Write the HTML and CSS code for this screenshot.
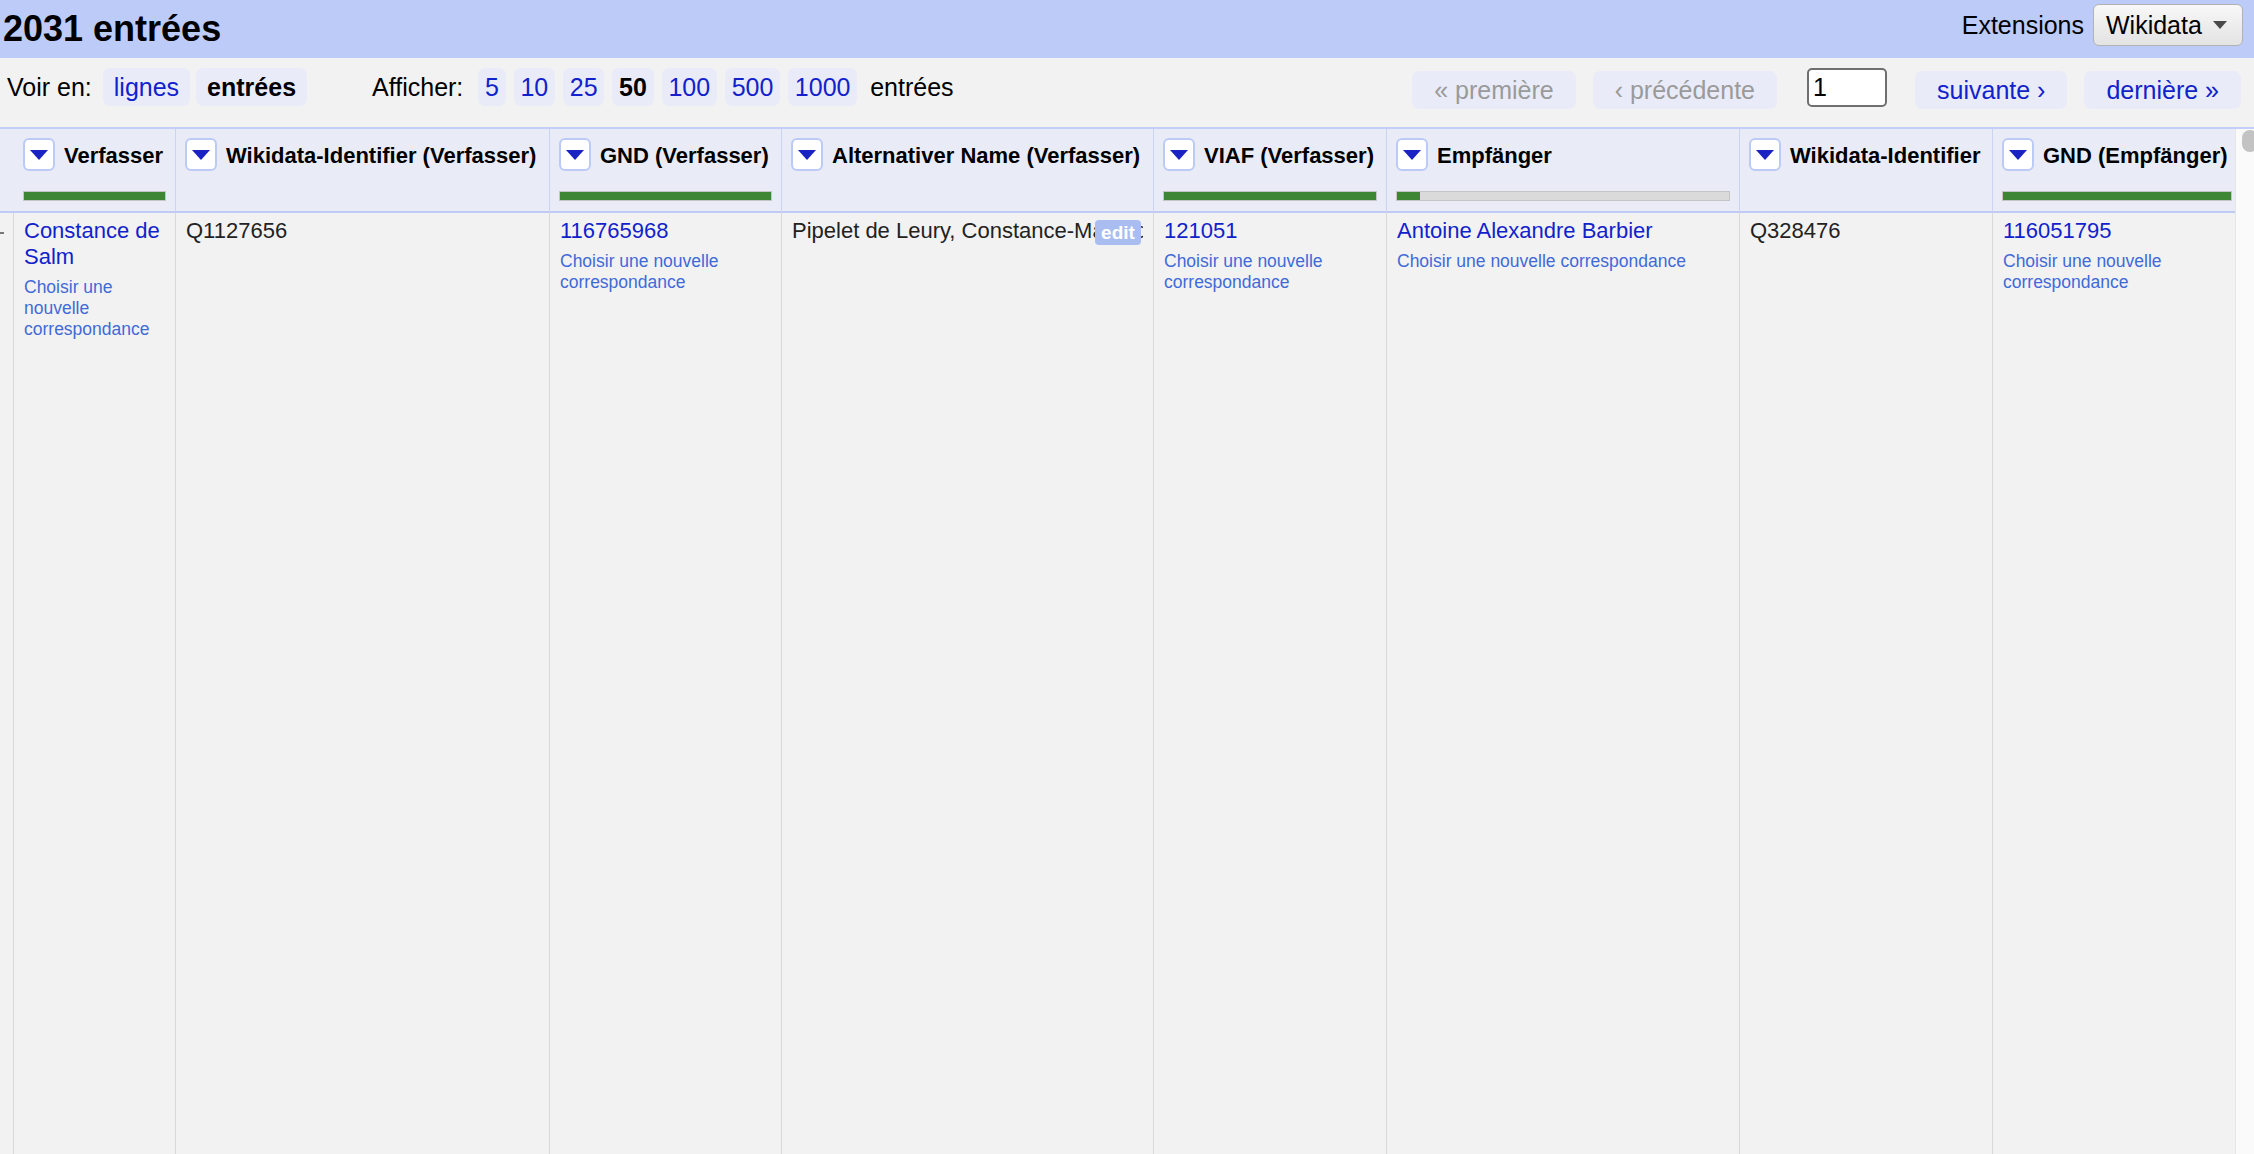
FILE: index.html
```html
<!DOCTYPE html>
<html lang="fr">
<head>
<meta charset="utf-8">
<title>2031 entrées</title>
<link rel="stylesheet" href="styles.css">
</head>
<body>
<div class="topbar">
  <h1 class="title">2031 entrées</h1>
  <div class="ext">
    <span class="ext-label">Extensions</span>
    <button class="ext-btn">Wikidata<span class="caret"></span></button>
  </div>
</div>

<div class="toolbar">
  <div class="group">
    <span class="label">Voir en:</span>
    <a class="pill">lignes</a>
    <span class="pill current">entrées</span>
  </div>
  <div class="group show">
    <span class="label">Afficher:</span>
    <a class="pill num">5</a>
    <a class="pill num">10</a>
    <a class="pill num">25</a>
    <span class="pill num current">50</span>
    <a class="pill num">100</a>
    <a class="pill num">500</a>
    <a class="pill num">1000</a>
    <span class="after">entrées</span>
  </div>
  <div class="pager">
    <span class="pbtn disabled">« première</span>
    <span class="pbtn disabled">‹ précédente</span>
    <input class="page-input" type="text" value="1">
    <a class="pbtn">suivante ›</a>
    <a class="pbtn">dernière »</a>
  </div>
</div>

<div class="grid-area">
  <div class="table">
    <div class="hcell"></div>
    <div class="hcell">
      <div class="hrow"><span class="dd"></span><span>Verfasser</span></div>
      <div class="bar"><div class="fill" style="width:100%"></div></div>
    </div>
    <div class="hcell">
      <div class="hrow"><span class="dd"></span><span>Wikidata-Identifier (Verfasser)</span></div>
    </div>
    <div class="hcell">
      <div class="hrow"><span class="dd"></span><span>GND (Verfasser)</span></div>
      <div class="bar"><div class="fill" style="width:100%"></div></div>
    </div>
    <div class="hcell">
      <div class="hrow"><span class="dd"></span><span>Alternativer Name (Verfasser)</span></div>
    </div>
    <div class="hcell">
      <div class="hrow"><span class="dd"></span><span>VIAF (Verfasser)</span></div>
      <div class="bar"><div class="fill" style="width:100%"></div></div>
    </div>
    <div class="hcell">
      <div class="hrow"><span class="dd"></span><span>Empfänger</span></div>
      <div class="bar"><div class="fill" style="width:7%"></div></div>
    </div>
    <div class="hcell">
      <div class="hrow"><span class="dd"></span><span>Wikidata-Identifier</span></div>
    </div>
    <div class="hcell last">
      <div class="hrow"><span class="dd"></span><span>GND (Empfänger)</span></div>
      <div class="bar"><div class="fill" style="width:100%"></div></div>
    </div>

    <div class="cell first"><span class="tick"></span></div>
    <div class="cell">
      <a class="link">Constance de Salm</a>
      <div class="sub">Choisir une nouvelle correspondance</div>
    </div>
    <div class="cell"><span class="plain">Q1127656</span></div>
    <div class="cell">
      <a class="link">116765968</a>
      <div class="sub">Choisir une nouvelle correspondance</div>
    </div>
    <div class="cell">
      <div class="clip">Pipelet de Leury, Constance-Marie de Théis</div>
      <span class="edit">edit</span>
    </div>
    <div class="cell">
      <a class="link">121051</a>
      <div class="sub">Choisir une nouvelle correspondance</div>
    </div>
    <div class="cell">
      <a class="link">Antoine Alexandre Barbier</a>
      <div class="sub">Choisir une nouvelle correspondance</div>
    </div>
    <div class="cell"><span class="plain">Q328476</span></div>
    <div class="cell last">
      <a class="link">116051795</a>
      <div class="sub">Choisir une nouvelle correspondance</div>
    </div>
  </div>
  <div class="scrollbar"><div class="thumb"></div></div>
</div>
</body>
</html>
```

FILE: styles.css
```css
* { box-sizing: border-box; }

html, body {
  margin: 0;
  padding: 0;
  background: #f2f2f2;
  font-family: "Liberation Sans", Arial, sans-serif;
  color: #000;
  overflow: hidden;
  height: 1154px;
}

/* ---------- top bar ---------- */
.topbar {
  height: 58px;
  background: #bdcbf9;
  display: flex;
  align-items: center;
  justify-content: space-between;
  padding: 0 11px 0 3px;
}
.title {
  margin: 0;
  font-size: 36px;
  font-weight: bold;
  line-height: 1;
}
.ext {
  display: flex;
  align-items: center;
  gap: 9px;
  margin-top: -8px;
  font-size: 25px;
}
.ext-btn {
  height: 42px;
  width: 150px;
  padding: 0 15px 0 12px;
  display: flex;
  align-items: center;
  justify-content: space-between;
  font-family: "Liberation Sans", Arial, sans-serif;
  font-size: 25px;
  color: #000;
  border: 1px solid #b2b2b2;
  border-radius: 6px;
  background: linear-gradient(#f8f8f8, #e3e3e3);
}
.caret {
  width: 0;
  height: 0;
  border-left: 7px solid transparent;
  border-right: 7px solid transparent;
  border-top: 8px solid #4a4a4a;
}

/* ---------- toolbar ---------- */
.toolbar {
  height: 69px;
  display: flex;
  align-items: flex-start;
  padding: 10px 13px 0 7px;
  font-size: 25px;
}
.group {
  display: flex;
  align-items: center;
  height: 38px;
}
.label { margin-right: 11px; }
.show { margin-left: 59px; }
.show .label { margin-right: 15px; }
.pill {
  height: 38px;
  display: inline-flex;
  align-items: center;
  padding: 0 11px;
  margin-right: 6px;
  border-radius: 7px;
  background: #e9ecf8;
  color: #1122cc;
}
.pill.num {
  padding: 0 6.75px;
  margin-right: 8px;
}
.pill.current {
  color: #000;
  font-weight: bold;
}
.after { margin-left: 5px; }

.pager {
  margin-left: auto;
  display: flex;
  align-items: flex-start;
}
.pbtn {
  height: 38px;
  margin-top: 3px;
  display: inline-flex;
  align-items: center;
  padding: 0 22px;
  border-radius: 7px;
  background: #e9ecf8;
  color: #1122cc;
  margin-left: 17px;
}
.pbtn:first-child { margin-left: 0; }
.pbtn.disabled { color: #9a9a9a; }
.page-input {
  width: 80px;
  height: 39px;
  margin: 0 11px 0 30px;
  padding: 0 4px;
  border: 2px solid #6f6f6f;
  border-radius: 5px;
  background: #fff;
  font-family: "Liberation Sans", Arial, sans-serif;
  font-size: 25px;
  color: #000;
}

/* ---------- table ---------- */
.grid-area {
  display: flex;
  height: 1027px;
  border-top: 2px solid #c3cff8;
}
.table {
  width: 2235px;
  display: grid;
  grid-template-columns: 14px 162px 374px 232px 372px 233px 353px 253px 242px;
  grid-template-rows: 84px 1fr;
}
.hcell {
  background: #e9ecf7;
  border-right: 1px solid #cbd4f3;
  border-bottom: 2px solid #bfcbf5;
  padding: 9px 9px 0 9px;
  overflow: hidden;
}
.hcell.last { padding-right: 3px; border-right: none; }
.hrow {
  display: flex;
  align-items: center;
  gap: 9px;
  height: 33px;
  padding-top: 2px;
  font-size: 22px;
  font-weight: bold;
  white-space: nowrap;
}
.dd {
  flex: none;
  width: 32px;
  height: 33px;
  margin-top: -2px;
  border: 2px solid #bccaf6;
  border-radius: 6px;
  background: #fff;
  display: flex;
  align-items: center;
  justify-content: center;
}
.dd::after {
  content: "";
  width: 0;
  height: 0;
  border-left: 9px solid transparent;
  border-right: 9px solid transparent;
  border-top: 10px solid #1a22c4;
}
.bar {
  margin-top: 20px;
  height: 10px;
  border: 1.5px solid #c4c4c4;
  background: #dadada;
}
.fill {
  height: 100%;
  background: #3e8534;
}

.cell {
  position: relative;
  border-right: 1px solid #d9d9d9;
  padding: 5px 10px;
  font-size: 22px;
  line-height: 26px;
}
.cell.last { border-right: none; }
.cell.first { padding: 0; }
.tick {
  display: block;
  width: 4px;
  height: 2px;
  margin-top: 19px;
  background: #777;
}
.link { color: #1122cc; }
.plain { color: #222; }
.sub {
  margin-top: 7px;
  font-size: 17.5px;
  line-height: 21px;
  color: #3f6ad8;
}
.clip {
  overflow: hidden;
  white-space: nowrap;
  color: #222;
}
.edit {
  position: absolute;
  top: 7px;
  right: 12px;
  width: 46px;
  height: 25px;
  border-radius: 4px;
  background: #a9bdf0;
  color: #ffffff;
  font-size: 19px;
  font-weight: bold;
  line-height: 25px;
  text-align: center;
}

.scrollbar {
  width: 19px;
  background: #fafafa;
  border-left: 1px solid #e6e6e6;
  overflow: hidden;
}
.thumb {
  margin: 1px 0 0 6px;
  width: 16px;
  height: 22px;
  border-radius: 8px;
  background: #c3c3c3;
}
```
